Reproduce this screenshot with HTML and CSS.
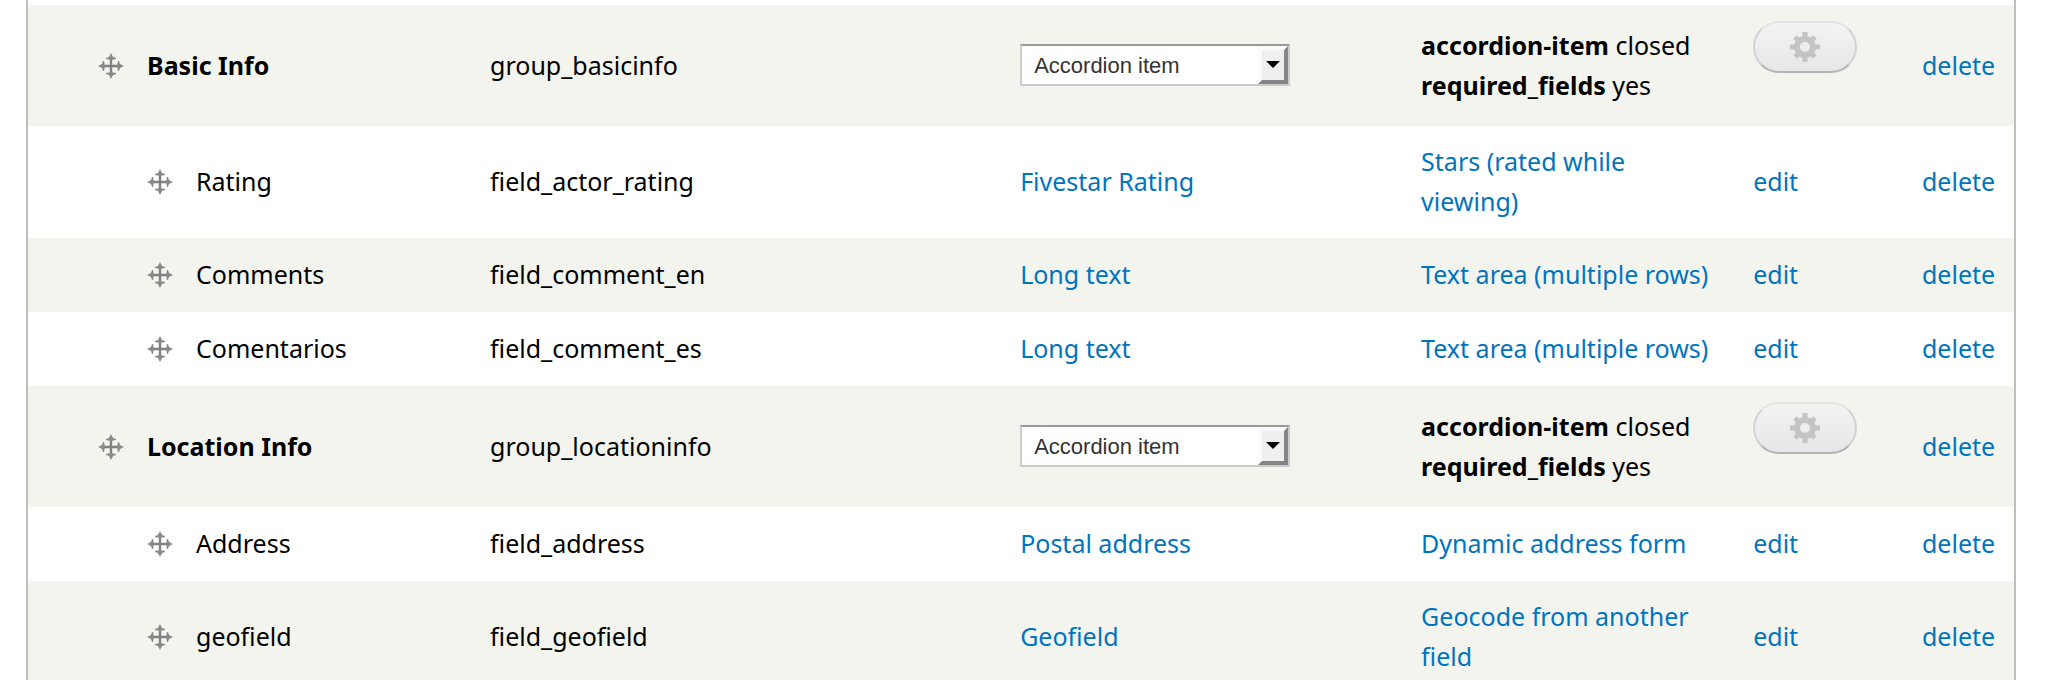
FILE: index.html
```html
<!DOCTYPE html>
<html lang="en">
<head>
<meta charset="utf-8">
<title>Manage fields</title>
<link rel="stylesheet" href="styles.css">
</head>
<body>
<svg class="sprite" aria-hidden="true">
  <symbol id="move" viewBox="0 0 26 26">
    <path d="M13 3V23M3 13H23" stroke="#808080" stroke-width="2.4"/>
    <path d="M13 0L15 4L18 5V6L13 7L8 6V5L11 4ZM13 26L15 22L18 21V20L13 19L8 20V21L11 22ZM0 13L4 15L5 18H6L7 13L6 8H5L4 11ZM26 13L22 15L21 18H20L19 13L20 8H21L22 11Z" fill="#8a8a8a"/>
  </symbol>
  <symbol id="gear" viewBox="0 0 30 30">
    <g stroke="#c4c4c4" stroke-width="5">
      <path d="M15 0V6M15 24V30M0 15H6M24 15H30M5 5L9 9M21 21L25 25M25 5L21 9M9 21L5 25"/>
      <circle cx="15" cy="15" r="8" fill="none" stroke-width="6"/>
    </g>
  </symbol>
</svg>
<main class="page">
  <table class="fields">
    <colgroup>
      <col class="col-label"><col class="col-name"><col class="col-type"><col class="col-widget"><col class="col-edit"><col class="col-delete">
    </colgroup>
    <tbody>
      <tr class="group">
        <td><div class="label"><a class="handle" href="#" aria-label="Move Basic Info"><svg><use href="#move"/></svg></a><strong>Basic Info</strong></div></td>
        <td>group_basicinfo</td>
        <td><div class="picker"><select aria-label="Format of Basic Info"><option>Accordion item</option></select><span class="arrow"></span></div></td>
        <td><strong>accordion-item</strong> closed<br><strong>required_fields</strong> yes</td>
        <td class="settings"><button type="button" aria-label="Settings of Basic Info"><svg><use href="#gear"/></svg></button></td>
        <td><a href="#">delete</a></td>
      </tr>
      <tr class="child">
        <td><div class="label"><a class="handle" href="#" aria-label="Move Rating"><svg><use href="#move"/></svg></a>Rating</div></td>
        <td>field_actor_rating</td>
        <td><a href="#">Fivestar Rating</a></td>
        <td><a href="#">Stars (rated while viewing)</a></td>
        <td><a href="#">edit</a></td>
        <td><a href="#">delete</a></td>
      </tr>
      <tr class="child">
        <td><div class="label"><a class="handle" href="#" aria-label="Move Comments"><svg><use href="#move"/></svg></a>Comments</div></td>
        <td>field_comment_en</td>
        <td><a href="#">Long text</a></td>
        <td><a href="#">Text area (multiple rows)</a></td>
        <td><a href="#">edit</a></td>
        <td><a href="#">delete</a></td>
      </tr>
      <tr class="child">
        <td><div class="label"><a class="handle" href="#" aria-label="Move Comentarios"><svg><use href="#move"/></svg></a>Comentarios</div></td>
        <td>field_comment_es</td>
        <td><a href="#">Long text</a></td>
        <td><a href="#">Text area (multiple rows)</a></td>
        <td><a href="#">edit</a></td>
        <td><a href="#">delete</a></td>
      </tr>
      <tr class="group">
        <td><div class="label"><a class="handle" href="#" aria-label="Move Location Info"><svg><use href="#move"/></svg></a><strong>Location Info</strong></div></td>
        <td>group_locationinfo</td>
        <td><div class="picker"><select aria-label="Format of Location Info"><option>Accordion item</option></select><span class="arrow"></span></div></td>
        <td><strong>accordion-item</strong> closed<br><strong>required_fields</strong> yes</td>
        <td class="settings"><button type="button" aria-label="Settings of Location Info"><svg><use href="#gear"/></svg></button></td>
        <td><a href="#">delete</a></td>
      </tr>
      <tr class="child">
        <td><div class="label"><a class="handle" href="#" aria-label="Move Address"><svg><use href="#move"/></svg></a>Address</div></td>
        <td>field_address</td>
        <td><a href="#">Postal address</a></td>
        <td><a href="#">Dynamic address form</a></td>
        <td><a href="#">edit</a></td>
        <td><a href="#">delete</a></td>
      </tr>
      <tr class="child">
        <td><div class="label"><a class="handle" href="#" aria-label="Move geofield"><svg><use href="#move"/></svg></a>geofield</div></td>
        <td>field_geofield</td>
        <td><a href="#">Geofield</a></td>
        <td><a href="#">Geocode from another field</a></td>
        <td><a href="#">edit</a></td>
        <td><a href="#">delete</a></td>
      </tr>
    </tbody>
  </table>
</main>
</body>
</html>
```
FILE: styles.css
```css
* {
  box-sizing: border-box;
}

body {
  margin: 0;
  background: #fff;
  color: #000;
  font-family: "Noto Sans", "Open Sans", sans-serif;
  font-size: 25px;
  line-height: 40px;
}

.sprite {
  position: absolute;
  width: 0;
  height: 0;
}

.page {
  height: 100vh;
  margin: 0 34px 0 26px;
  padding-top: 5px;
  border: solid #bfc0b9;
  border-width: 0 2px;
  overflow: hidden;
}

.fields {
  width: 100%;
  table-layout: fixed;
  border-collapse: collapse;
}

.col-label { width: 22.26%; }
.col-name { width: 26.69%; }
.col-type { width: 20.19%; }
.col-widget { width: 16.72%; }
.col-edit { width: 8.5%; }
.col-delete { width: 5.64%; }

.fields tr:nth-child(odd) {
  background: #f3f4ee;
}

.fields td {
  height: 74px;
  padding: 15px 16px 17px 20px;
  vertical-align: middle;
}

.fields .group td {
  height: 121px;
}

.fields .settings {
  padding-top: 16px;
  padding-right: 0;
  vertical-align: top;
}

a {
  color: #0074bd;
  text-decoration: none;
}

.label {
  display: flex;
  align-items: center;
  gap: 23px;
  padding-left: 50px;
}

.child .label {
  padding-left: 99px;
}

.handle {
  padding-top: 2px;
}

.handle svg {
  display: block;
  width: 26px;
  height: 26px;
}

.picker {
  position: relative;
  width: 270px;
  height: 42px;
}

.picker select {
  display: block;
  width: 100%;
  height: 100%;
  padding: 2px 40px 0 12px;
  appearance: none;
  border: 2px solid #ccc;
  border-top-color: #999;
  border-radius: 0;
  background: #fff;
  color: #333;
  font-family: "Liberation Sans", Arial, sans-serif;
  font-size: 22px;
}

.arrow {
  position: absolute;
  top: 2px;
  right: 2px;
  display: grid;
  place-items: center;
  width: 30px;
  height: 38px;
  border: 4px solid #fafafa;
  border-right-color: #858585;
  border-bottom-color: #858585;
  background: #efefef;
  pointer-events: none;
}

.arrow::before {
  content: "";
  border: solid transparent;
  border-width: 7px 7px 0;
  border-top-color: #000;
}

button {
  display: grid;
  place-items: center;
  width: 104px;
  height: 52px;
  padding: 0;
  border: 2px solid #d2d2d2;
  border-top-color: #e3e3e3;
  border-bottom-color: #b4b4b4;
  border-radius: 26px;
  background: linear-gradient(#f3f3f3, #e7e7e7);
}

button svg {
  display: block;
  width: 30px;
  height: 30px;
}
```
